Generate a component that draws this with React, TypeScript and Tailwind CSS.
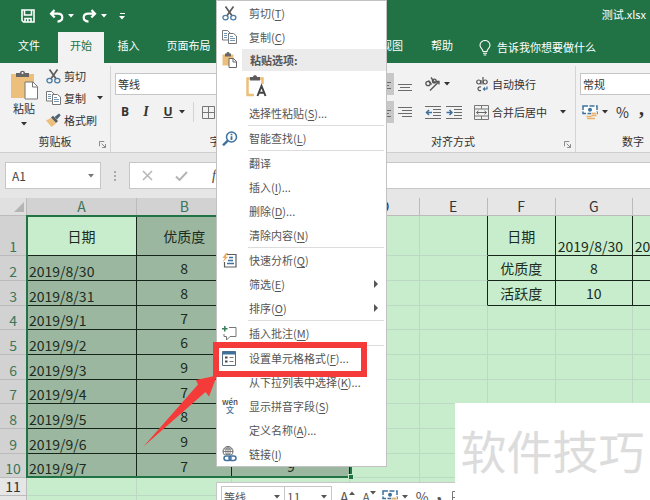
import type { ReactNode } from "react";
import clsx from "clsx";

const tabs = [
  { label: "文件", width: "w-[58px]" },
  { label: "开始", width: "w-[46px]", active: true },
  { label: "插入", width: "w-[49px]" },
  { label: "页面布局", width: "w-[71px]" },
  { label: "公式", width: "w-12" },
  { label: "数据", width: "w-12" },
  { label: "审阅", width: "w-12" },
  { label: "视图", width: "w-12" },
  { label: "帮助", width: "w-[52px]" },
];

const columns = [
  { name: "A", width: "w-[110px]", selected: true },
  { name: "B", width: "w-[95px]", selected: true },
  { name: "C", width: "w-[118px]", selected: true },
  { name: "D", width: "w-[69px]" },
  { name: "E", width: "w-[68px]" },
  { name: "F", width: "w-[68px]" },
  { name: "G", width: "w-[77px]" },
  { name: "H", width: "w-[77px]" },
];

const rows = [
  { height: "h-10", cells: ["日期", "优质度", "活跃度", "", "", "日期", "2019/8/30", "2019/8/31"] },
  { height: "h-[25px]", cells: ["2019/8/30", "8", "10", "", "", "优质度", "8", "8"] },
  { height: "h-[25px]", cells: ["2019/8/31", "8", "9", "", "", "活跃度", "10", "9"] },
  { height: "h-6", cells: ["2019/9/1", "7", "8"] },
  { height: "h-[25px]", cells: ["2019/9/2", "6", "7"] },
  { height: "h-[25px]", cells: ["2019/9/3", "9", "8"] },
  { height: "h-6", cells: ["2019/9/4", "7", "9"] },
  { height: "h-[25px]", cells: ["2019/9/5", "8", "8"] },
  { height: "h-[25px]", cells: ["2019/9/6", "9", "7"] },
  { height: "h-6", cells: ["2019/9/7", "7", "9"] },
  { height: "h-[18px]", cells: [] },
  { height: "h-[18px]", cells: [] },
];

const Caret = ({ className }: { className?: string }) => (
  <svg viewBox="0 0 6 4" className={clsx("h-1 w-1.5 shrink-0 fill-current", className)}>
    <path d="M0 0h6L3 3.5z" />
  </svg>
);

const SaveIcon = () => (
  <svg viewBox="0 0 14 14" className="size-3.5" fill="none" stroke="#fff" strokeWidth="1.6">
    <path d="M1 1h12v12H2.5L1 11.5z" />
    <path d="M3.500 1v5h7V1M4 13V9.500h6V13M6.800 10v3" />
  </svg>
);

const UndoIcon = ({ className }: { className?: string }) => (
  <svg viewBox="0 0 15 14" className={clsx("h-3.5 w-[15px]", className)} fill="none" stroke="#fff" strokeWidth="2.2">
    <path d="M5.500 1L2 4.700l3.700 3.800M2.200 4.700h6.500c2.800 0 4.600 1.600 4.600 3.900 0 2.400-1.900 3.800-4.800 4" />
  </svg>
);

const BulbIcon = () => (
  <svg viewBox="0 0 12 16" className="h-4 w-3" fill="none" stroke="#fff" strokeWidth="1.1">
    <path d="M4 11.500C4 9 1 8.300 1 5.300a5 4.800 0 0 1 10 0C11 8.300 8 9 8 11.500zM4 13.300h4M4.700 15h2.600" />
  </svg>
);

const PasteIcon = () => (
  <svg viewBox="0 0 28 30" className="h-[30px] w-7">
    <path d="M1 4h23v24H1z" fill="#ecc07c" />
    <path d="M6 3h4c0-3 5-3 5 0h4v4H6z" fill="#666" />
    <circle cx="12.500" cy="3" r="1" fill="#fff" />
    <path d="M15 12h8l4.500 4.500V29H15z" fill="#fff" stroke="#777" />
    <path d="M22.500 12v5h5" fill="none" stroke="#777" />
  </svg>
);

const CutIcon = () => (
  <svg viewBox="0 0 15 15" className="size-[15px]" fill="none">
    <path d="M3.500 0.500l6.700 9.500M11.500 0.500L4.800 10" stroke="#5c5c5c" strokeWidth="1.700" />
    <ellipse cx="3.500" cy="11.600" rx="2.600" ry="2.200" stroke="#4d7ca3" strokeWidth="1.300" />
    <ellipse cx="11.300" cy="11.600" rx="2.600" ry="2.200" stroke="#4d7ca3" strokeWidth="1.300" />
  </svg>
);

const CopyIcon = () => (
  <svg viewBox="0 0 15 14" className="h-3.5 w-[15px]" fill="#fff" stroke="#777">
    <path d="M0.500 0.500h5L8 3v7H0.500z" />
    <path d="M2 3.500h3M2 5.500h3M2 7.500h3" stroke="#7497b3" />
    <path d="M6.500 3.500h5L14.500 6v7.500h-8z" />
    <path d="M8 6.500h3M8 8.500h5M8 10.500h5" stroke="#7497b3" />
  </svg>
);

const BrushIcon = () => (
  <svg viewBox="0 0 15 14" className="h-3.5 w-[15px]">
    <path d="M0 7.500l5-2.500 5 5.500L5.500 14z" fill="#ecc07c" />
    <path d="M5 4.500l2-1.700 5 5.200-2 2z" fill="#5c5c5c" />
    <path d="M8.500 4L13 0.500l1.700 1.700L11 6.500z" fill="#4b6479" />
  </svg>
);

const PasteSmallIcon = () => (
  <svg viewBox="0 0 15 16" className="h-4 w-[15px]">
    <path d="M0.500 2.500h11v11h-11z" fill="#ecc07c" />
    <path d="M3 1.500h1.500c0-2 3-2 3 0H9v3H3z" fill="#666" />
    <path d="M7 6.500h4.500l3 3v6H7z" fill="#fff" stroke="#666" />
    <path d="M11 6.500v3.500h3.500" fill="none" stroke="#666" />
  </svg>
);

const PasteTextIcon = () => (
  <svg viewBox="0 0 21 22" className="h-[22px] w-[21px]">
    <path d="M8 20H1.500V3.500H4M13 3.500h3.500V9" fill="none" stroke="#ecc07c" strokeWidth="2.500" />
    <path d="M4 2h3c0-2.500 4-2.500 4 0h3v3.500H4z" fill="#5c5c5c" />
    <path d="M11.500 21L15.500 11l4 10M13 17.800h5" fill="none" stroke="#444" strokeWidth="2" />
  </svg>
);

const LookupIcon = () => (
  <svg viewBox="0 0 16 15" className="h-[15px] w-4" fill="none" stroke="#3f719d">
    <circle cx="9.500" cy="6" r="5" strokeWidth="1.500" fill="#fff" />
    <path d="M5.800 9.700L1 14.300" strokeWidth="2.400" />
    <path d="M9.500 5.200v3.800M9.500 2.800v1.500" strokeWidth="1.800" />
  </svg>
);

const AnalyzeIcon = () => (
  <svg viewBox="0 0 15 15" className="size-[15px]" fill="none">
    <path d="M5 1.500h9V14H2.500V9" stroke="#5c5c5c" strokeWidth="1.200" />
    <path d="M4 0L0.500 5h2.200L0.500 9.500 6 3.800H3.700L6 0z" fill="#ecaa62" />
    <path d="M7 4.500h4M6 7.500h5M5 10.500h7" stroke="#3f719d" strokeWidth="1.500" />
  </svg>
);

const CommentIcon = () => (
  <svg viewBox="0 0 15 15" className="size-[15px]" fill="none">
    <path d="M7 1.500h7v9H8L4.500 14v-3.500H2V8" stroke="#777" />
    <path d="M2.800 0v5.500M0 2.800h5.500" stroke="#38805a" strokeWidth="1.500" />
  </svg>
);

const FormatCellsIcon = () => (
  <svg viewBox="0 0 14 15" className="h-[15px] w-3.5" fill="none">
    <path d="M0.500 0.500h13v14H0.500z" fill="#fff" stroke="#5c6c7c" />
    <path d="M0.500 2h13" stroke="#3f719d" strokeWidth="3" />
    <path d="M3 6.500h2.500M3 10.500h2.500" stroke="#444" strokeWidth="2" />
    <path d="M7.500 6.500h4M7.500 10.500h4" stroke="#777" strokeWidth="1.200" />
  </svg>
);

const PhoneticIcon = () => (
  <span className="flex flex-col items-center text-[8px] leading-2 font-medium text-[#444]">
    <span>wén</span>
    <span className="text-[#3f719d]">文</span>
  </span>
);

const LinkIcon = () => (
  <svg viewBox="0 0 15 16" className="h-4 w-[15px]" fill="none">
    <circle cx="6" cy="5.500" r="5" stroke="#666" />
    <path d="M1 5.500h10M6 0.500v9M2 3h8M2.500 8.200h7M6 0.500c-3 2.500-3 7 0 10M6 0.500c3 2.500 3 7 0 10" stroke="#666" strokeWidth="0.800" />
    <path d="M1.500 9h13v6.500h-13z" fill="#fff" />
    <rect x="2" y="10" width="7" height="4.500" rx="2.200" stroke="#3f719d" strokeWidth="1.500" />
    <rect x="7" y="10" width="7" height="4.500" rx="2.200" stroke="#3f719d" strokeWidth="1.500" />
  </svg>
);

const LauncherIcon = () => (
  <svg viewBox="0 0 8 8" className="size-[7px]" fill="none" stroke="#777">
    <path d="M0.500 6V0.500H6M3 3l4 4M7.500 3.500v4h-4" />
  </svg>
);

const CurrencyIcon = () => (
  <svg viewBox="0 0 16 15" className="h-[15px] w-4" fill="none">
    <path d="M1 1h14v7.500H1z" fill="#fff" stroke="#3f719d" strokeWidth="1.500" strokeDasharray="5 1.500" />
    <circle cx="8" cy="4.700" r="2" fill="#3f719d" />
    <path d="M9 7h6v7H9z" fill="#f2f2f2" />
    <path d="M9.500 8.500h5M9.500 10.500h5M4.500 11.500h5M5 13.500h8" stroke="#eab268" strokeWidth="1.300" />
  </svg>
);

const LinesIcon = ({ right }: { right?: boolean }) => (
  <svg viewBox="0 0 14 11" className="h-[11px] w-3.5" fill="none" stroke="#6b6b6b">
    {right ? <path d="M0 0.500h14M4 3.500h10M0 6.500h14M4 9.500h10" /> : <path d="M0 3.500h14M2 6.500h10M0 9.500h14" />}
  </svg>
);

const IndentIcon = ({ back }: { back?: boolean }) => (
  <svg viewBox="0 0 16 13" className="h-[13px] w-4" fill="none" stroke="#6b6b6b">
    <path d="M0 0.500h16M8 3.500h8M8 6.500h8M8 9.500h8M0 12.500h16" />
    <path d={back ? "M7 6.500H1.500M4 4L1.500 6.500 4 9" : "M0.500 6.500H6M3.500 4L6 6.500 3.500 9"} stroke="#3f719d" strokeWidth="1.500" />
  </svg>
);

const OrientationIcon = () => (
  <svg viewBox="0 0 15 14" className="h-3.5 w-[15px]" fill="none" stroke="#555">
    <circle cx="3" cy="6.500" r="2.200" strokeWidth="1.300" />
    <path d="M3.500 3.500l3 4M6 0.500l4 5.500M5 13.500L13.500 5M10.500 4.500h3.500v3" strokeWidth="1.300" />
    <circle cx="9.300" cy="4" r="1.900" strokeWidth="1.300" />
  </svg>
);

const WrapIcon = () => (
  <svg viewBox="0 0 12 15" className="h-[15px] w-3" fill="none" stroke="#555" strokeWidth="1.200">
    <circle cx="2.700" cy="5" r="2" />
    <path d="M5 3v4.500M7 0v7.500" />
    <circle cx="9.200" cy="5" r="2" />
    <path d="M5 10c-4-1-4 4.500 0 3.500" />
    <path d="M11 9.500V12H7.500M9 10.500L7.500 12 9 13.500" stroke="#3f719d" />
  </svg>
);

const MergeIcon = () => (
  <svg viewBox="0 0 15 15" className="size-[15px]" fill="none" stroke="#777">
    <path d="M0.500 0.500h14v14H0.500zM0.500 4h14M0.500 11h14M7.500 0.500V4M7.500 11v3.500" />
    <path d="M2.500 7.500h10M4.500 5.800L2.500 7.500l2 1.700M10.500 5.800l2 1.700-2 1.700" stroke="#666" />
  </svg>
);

const BorderIcon = () => (
  <svg viewBox="0 0 13 13" className="size-[13px]" fill="none" stroke="#777">
    <path d="M0.500 0.500h12v12H0.500zM6.500 0.500v12M0.500 6.500h12" />
  </svg>
);

interface GroupProps {
  label: string;
  className?: string;
  launcher?: boolean;
  children: ReactNode;
}

const RibbonGroup = ({ label, className, launcher, children }: GroupProps) => (
  <section className={clsx("mt-[3px] flex shrink-0 flex-col border-r border-[#d4d4d4]", className)}>
    <div className="h-[66px]">{children}</div>
    <div className="relative flex h-5 items-center justify-center pb-0.5">
      {label}
      {launcher && (
        <button type="button" aria-label={label} className="absolute right-1 bottom-1">
          <LauncherIcon />
        </button>
      )}
    </div>
  </section>
);

const Divider = () => <span className="h-[26px] w-px bg-[#d4d4d4]" />;

const ToolButton = ({ label, className, children }: { label: string; className?: string; children?: ReactNode }) => (
  <button type="button" aria-label={label} className={clsx("flex h-[22px] items-center justify-center", className)}>
    {children}
  </button>
);

const Ribbon = () => (
  <div className="flex overflow-hidden border-b border-[#cfcfcf] bg-[#f2f2f2] text-[#333]">
    <RibbonGroup label="剪贴板" className="w-[111px]" launcher>
      <div className="flex h-full gap-1.5 pl-2">
        <button type="button" className="flex w-8 flex-col items-center pt-1">
          <PasteIcon />
          <span className="leading-4">粘贴</span>
          <Caret className="mt-1.5" />
        </button>
        <div className="-mt-px flex flex-col">
          <button type="button" className="flex h-[22px] items-center gap-[3px]">
            <CutIcon />
            剪切
          </button>
          <button type="button" className="flex h-[22px] items-center gap-[3px]">
            <CopyIcon />
            复制
            <Caret className="ml-2" />
          </button>
          <button type="button" className="flex h-[22px] items-center gap-[3px]">
            <BrushIcon />
            格式刷
          </button>
        </div>
      </div>
    </RibbonGroup>

    <RibbonGroup label="字体" className="w-[220px]" launcher>
      <div className="flex flex-col gap-1.5 pt-[7px] pl-1">
        <div className="flex">
          <select aria-label="字体" className="h-[22px] w-[120px] appearance-none border border-[#c6c6c6] bg-white pl-0.5">
            <option>等线</option>
          </select>
          <select aria-label="字号" className="h-[22px] w-10 appearance-none border border-[#c6c6c6] bg-white pl-0.5">
            <option>11</option>
          </select>
        </div>
        <div className="flex items-center font-['Open_Sans',sans-serif]">
          <ToolButton label="加粗" className="w-5 text-xs font-bold">B</ToolButton>
          <ToolButton label="倾斜" className="w-[22px] font-['Liberation_Serif',serif] text-sm font-bold italic">I</ToolButton>
          <ToolButton label="下划线" className="w-[22px] text-xs font-bold underline">U</ToolButton>
          <Caret />
          <span className="mx-2 h-5 w-px bg-[#d4d4d4]" />
          <ToolButton label="边框">
            <BorderIcon />
          </ToolButton>
        </div>
      </div>
    </RibbonGroup>

    <RibbonGroup label="对齐方式" className="w-[245px]" launcher>
      <div className="flex flex-col gap-1.5 pt-[7px] pl-5">
        <div className="flex items-center">
          <ToolButton label="顶端对齐" className="w-[22px]">
            <LinesIcon />
          </ToolButton>
          <ToolButton label="垂直居中" className="w-[21px] bg-[#c8c8c8]">
            <LinesIcon />
          </ToolButton>
          <ToolButton label="底端对齐" className="w-[21px] pt-1">
            <LinesIcon />
          </ToolButton>
          <span className="ml-1">
            <Divider />
          </span>
          <ToolButton label="方向" className="ml-1.5 gap-1">
            <OrientationIcon />
            <Caret />
          </ToolButton>
          <span className="ml-[18px]">
            <Divider />
          </span>
          <ToolButton label="自动换行" className="ml-2 gap-1">
            <WrapIcon />
            自动换行
          </ToolButton>
        </div>
        <div className="flex items-center">
          <ToolButton label="左对齐" className="w-[22px]">
            <LinesIcon />
          </ToolButton>
          <ToolButton label="居中" className="w-[21px] bg-[#c8c8c8]">
            <LinesIcon />
          </ToolButton>
          <ToolButton label="右对齐" className="w-[21px]">
            <LinesIcon right />
          </ToolButton>
          <span className="ml-1">
            <Divider />
          </span>
          <ToolButton label="减少缩进量" className="ml-1.5">
            <IndentIcon back />
          </ToolButton>
          <ToolButton label="增加缩进量" className="ml-[5px]">
            <IndentIcon />
          </ToolButton>
          <span className="ml-1.5">
            <Divider />
          </span>
          <ToolButton label="合并后居中" className="ml-1.5 gap-[3px]">
            <MergeIcon />
            合并后居中
            <Caret className="ml-2.5" />
          </ToolButton>
        </div>
      </div>
    </RibbonGroup>

    <RibbonGroup label="数字" className="w-[115px]">
      <div className="flex flex-col gap-1.5 pt-[7px] pl-1">
        <select aria-label="数字格式" className="h-[22px] w-[105px] appearance-none border border-[#c6c6c6] bg-white pl-0.5">
          <option>常规</option>
        </select>
        <div className="flex items-center pl-0.5">
          <ToolButton label="会计数字格式" className="gap-1">
            <CurrencyIcon />
            <Caret />
          </ToolButton>
          <ToolButton label="百分比样式" className="ml-2 text-sm">%</ToolButton>
          <ToolButton label="千位分隔样式" className="ml-2.5 pb-2 font-['Liberation_Serif',serif] text-xl font-bold">,</ToolButton>
        </div>
      </div>
    </RibbonGroup>
  </div>
);

const FormulaBar = () => (
  <div className="flex h-[45px] shrink-0 items-start bg-[#e6e6e6] pt-[9px] pl-[5px] text-[#444]">
    <div className="flex h-[27px] w-24 shrink-0 items-center border border-[#c6c6c6] bg-white pr-1.5">
      <input aria-label="名称框" defaultValue="A1" className="w-full min-w-0 pl-1.5 text-xs outline-none" />
      <Caret className="text-[#777]" />
    </div>
    <div className="flex h-[27px] w-7 shrink-0 flex-col items-center justify-center gap-0.5">
      <span className="size-0.5 bg-[#aaa]" />
      <span className="size-0.5 bg-[#aaa]" />
      <span className="size-0.5 bg-[#aaa]" />
    </div>
    <div className="flex h-[27px] flex-1 items-center border border-r-0 border-[#c6c6c6] bg-white pl-3">
      <button type="button" aria-label="取消">
        <svg viewBox="0 0 11 11" className="size-[11px]" fill="none" stroke="#b5b5b5" strokeWidth="1.500">
          <path d="M1 1l9 9M10 1l-9 9" />
        </svg>
      </button>
      <button type="button" aria-label="输入" className="ml-[22px]">
        <svg viewBox="0 0 13 10" className="h-2.5 w-[13px]" fill="none" stroke="#b5b5b5" strokeWidth="2">
          <path d="M1 5.500L4.500 9 12 1" />
        </svg>
      </button>
      <button type="button" className="ml-6 font-['Liberation_Serif',serif] text-sm italic">fx</button>
      <input aria-label="编辑栏" className="ml-2 h-full min-w-0 flex-1 outline-none" />
    </div>
  </div>
);

const cellClass = (row: number, col: number) => {
  const selected = row < 10 && col < 3;
  const side = row < 3 && col > 4;
  return clsx(
    "truncate border-r border-b p-0 leading-[18px]",
    selected && "border-[#15251a]",
    side && "border-[#15251a]",
    !selected && !side && "border-[#bcd9c3]",
    row < 3 && col === 4 && "border-r-[#15251a]",
    selected && (row > 0 || col > 0) ? "bg-[#9bb79f]" : "bg-[#c7edcc]",
    (col === 0 && row > 0) || (row === 0 && col > 5) ? "pl-0.5 text-left align-bottom" : "text-center align-middle"
  );
};

const Sheet = () => (
  <div className="relative flex-1 overflow-hidden bg-[#c7edcc]">
    <table className="w-[710px] table-fixed border-separate border-spacing-0 text-sm text-[#1c2b20]">
      <thead>
        <tr className="h-[18px]">
          <th className="w-[27px] border-r border-b border-[#bbb] bg-[#e0e0e0] p-0">
            <svg viewBox="0 0 10 10" className="mr-0.5 ml-auto size-2.5 fill-[#b5b5b5]">
              <path d="M10 0v10H0z" />
            </svg>
          </th>
          {columns.map((c) => (
            <th
              key={c.name}
              className={clsx(
                "border-r border-b border-[#bbb] p-0 leading-[17px] font-normal",
                c.width,
                c.selected ? "bg-[#d2d2d2] text-[#3d7558]" : "bg-[#e6e6e6] text-[#333]"
              )}
            >
              {c.name}
            </th>
          ))}
        </tr>
      </thead>
      <tbody>
        {rows.map((r, row) => (
          <tr key={row} className={r.height}>
            <th
              className={clsx(
                "border-r border-b border-[#bbb] p-0 text-center align-bottom leading-[17px] font-normal",
                row < 10 ? "bg-[#d2d2d2] text-[#3d7558]" : "bg-[#e6e6e6] text-[#333]"
              )}
            >
              {row + 1}
            </th>
            {columns.map((c, col) => (
              <td key={c.name} className={cellClass(row, col)}>
                {r.cells[col]}
              </td>
            ))}
          </tr>
        ))}
      </tbody>
    </table>

    {/* selection frame with its fill handle */}
    <div className="pointer-events-none absolute top-[17px] left-[26px] h-[263px] w-[326px] border-2 border-[#217346]">
      <span className="absolute -right-1 -bottom-1 size-1.5 border border-[#c7edcc] bg-[#217346]" />
    </div>
  </div>
);

interface MenuItemProps {
  label: string;
  hotkey?: string;
  more?: boolean;
  submenu?: boolean;
  icon?: ReactNode;
  highlighted?: boolean;
}

const MenuItem = ({ label, hotkey, more, submenu, icon, highlighted }: MenuItemProps) => (
  <button type="button" role="menuitem" className="relative flex h-6 w-full items-center text-left whitespace-nowrap">
    <span className="flex w-8 shrink-0 items-center pl-[5px]">{icon}</span>
    <span>
      {label}
      {hotkey && (
        <>
          (<u className="underline-offset-2">{hotkey}</u>)
        </>
      )}
      {more && "..."}
    </span>
    {submenu && (
      <svg viewBox="0 0 4 8" className="mr-2 ml-auto h-2 w-1 fill-[#555]">
        <path d="M0 0l4 4-4 4z" />
      </svg>
    )}
    {highlighted && <span className="absolute -top-1 -left-1 h-[35px] w-[154px] border-6 border-[#f43b39]" />}
  </button>
);

const Separator = () => <hr className="mr-0.5 ml-[31px] border-[#dcdcdc]" />;

const ContextMenu = () => (
  <div role="menu" className="absolute top-0 left-[216px] w-[171px] border border-[#c2c2c2] bg-white text-[#555]">
    <MenuItem label="剪切" hotkey="T" icon={<CutIcon />} />
    <MenuItem label="复制" hotkey="C" icon={<CopyIcon />} />
    <div className="flex h-[22px] items-center">
      <span className="w-[25px] pl-[5px]">
        <PasteSmallIcon />
      </span>
      <span className="flex h-full flex-1 items-center bg-[#ebebeb] pl-2 font-bold">粘贴选项:</span>
    </div>
    <button type="button" role="menuitem" aria-label="只保留文本" className="flex h-[30px] items-center pl-[29px]">
      <PasteTextIcon />
    </button>
    <MenuItem label="选择性粘贴" hotkey="S" more />
    <Separator />
    <MenuItem label="智能查找" hotkey="L" icon={<LookupIcon />} />
    <Separator />
    <MenuItem label="翻译" />
    <MenuItem label="插入" hotkey="I" more />
    <MenuItem label="删除" hotkey="D" more />
    <MenuItem label="清除内容" hotkey="N" />
    <Separator />
    <MenuItem label="快速分析" hotkey="Q" icon={<AnalyzeIcon />} />
    <MenuItem label="筛选" hotkey="E" submenu />
    <MenuItem label="排序" hotkey="O" submenu />
    <Separator />
    <MenuItem label="插入批注" hotkey="M" icon={<CommentIcon />} />
    <Separator />
    <MenuItem label="设置单元格格式" hotkey="F" more icon={<FormatCellsIcon />} highlighted />
    <MenuItem label="从下拉列表中选择" hotkey="K" more />
    <MenuItem label="显示拼音字段" hotkey="S" icon={<PhoneticIcon />} />
    <MenuItem label="定义名称" hotkey="A" more />
    <MenuItem label="链接" hotkey="I" icon={<LinkIcon />} />
  </div>
);

const MiniToolbar = () => (
  <div className="absolute top-[482px] left-[216px] flex h-[50px] w-[260px] items-start border border-[#c6c6c6] bg-white pt-[3px] pl-1 text-[#555]">
    <div className="flex h-[22px] w-16 items-center border border-[#c6c6c6] pr-1">
      <select aria-label="浮动工具栏字体" className="w-full appearance-none pl-0.5">
        <option>等线</option>
      </select>
      <Caret />
    </div>
    <div className="flex h-[22px] w-[47px] items-center border border-l-0 border-[#c6c6c6] pr-1">
      <select aria-label="浮动工具栏字号" className="w-full appearance-none pl-0.5 text-xs">
        <option>11</option>
      </select>
      <Caret />
    </div>
    <ToolButton label="增大字号" className="ml-2 text-sm">
      A<Caret className="mb-2 rotate-180" />
    </ToolButton>
    <ToolButton label="减小字号" className="ml-2 text-xs">
      A<Caret className="mb-2" />
    </ToolButton>
    <ToolButton label="货币" className="ml-1.5 gap-1">
      <CurrencyIcon />
      <Caret />
    </ToolButton>
    <ToolButton label="百分比" className="ml-2 text-sm">%</ToolButton>
    <ToolButton label="千位分隔" className="ml-2 pb-2 font-['Liberation_Serif',serif] text-xl font-bold">,</ToolButton>
    <ToolButton label="表格边框" className="ml-2.5">
      <BorderIcon />
    </ToolButton>
  </div>
);

const App = () => {
  return (
    <div className="relative flex h-screen w-full flex-col overflow-hidden bg-[#c7edcc] font-['Noto_Sans_CJK_SC',sans-serif] text-[11px]">
      <header className="shrink-0 bg-[#217346] text-white">
        <div className="flex h-8 items-center pl-[21px]">
          <button type="button" aria-label="保存">
            <SaveIcon />
          </button>
          <button type="button" aria-label="撤销" className="ml-3.5 flex items-center gap-1">
            <UndoIcon />
            <Caret />
          </button>
          <button type="button" aria-label="恢复" className="ml-2 flex items-center gap-1">
            <UndoIcon className="-scale-x-100" />
            <Caret />
          </button>
          <button type="button" aria-label="自定义快速访问工具栏" className="ml-3 flex flex-col items-center gap-0.5">
            <span className="h-px w-[5px] bg-white" />
            <Caret />
          </button>
          <h1 className="mr-1 mb-1 ml-auto">测试.xlsx</h1>
        </div>
        <nav className="flex h-[31px]">
          {tabs.map((t) => (
            <button
              key={t.label}
              type="button"
              className={clsx(
                "shrink-0 pb-1",
                t.width,
                t.active && "bg-[#f2f2f2] text-[#217346]"
              )}
            >
              {t.label}
            </button>
          ))}
          <button type="button" className="ml-[11px] flex shrink-0 items-center gap-1.5">
            <BulbIcon />
            告诉我你想要做什么
          </button>
        </nav>
      </header>

      <Ribbon />
      <FormulaBar />
      <Sheet />
      <MiniToolbar />
      <ContextMenu />

      {/* pointer to the highlighted command */}
      <svg viewBox="0 0 80 80" className="absolute top-[370px] left-[140px] size-20 fill-[#f43b39]">
        <path d="M3.500 76.500L58 14.500 56 10 77 5.500 69 26.500 65.500 22z" />
      </svg>

      <div className="absolute right-0 bottom-0 flex h-[97px] w-[195px] items-center justify-center bg-white pb-1 text-[46px] whitespace-nowrap text-[#dcdcdc]">
        软件技巧
      </div>
    </div>
  );
};

export default App;
